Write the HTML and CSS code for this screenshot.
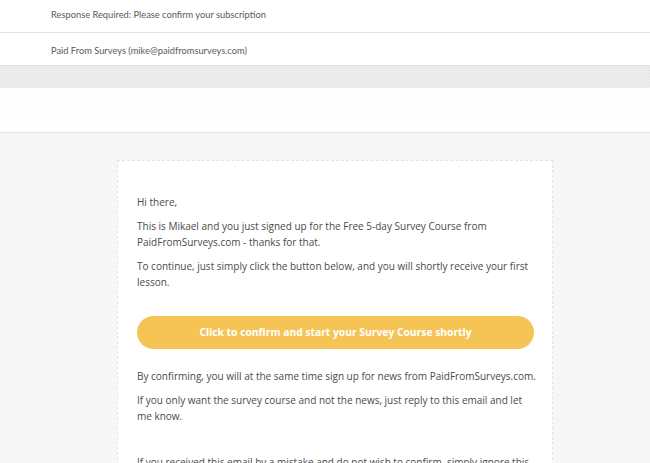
FILE: index.html
```html
<!DOCTYPE html>
<html>
<head>
<meta charset="utf-8">
<link rel="stylesheet" href="styles.css">
</head>
<body>
<div class="header-row subject">Response Required: Please confirm your subscription</div>
<div class="header-row sender">Paid From Surveys (mike@paidfromsurveys.com)</div>
<div class="band"></div>
<div class="blank"></div>
<div class="email-bg">
  <div class="card">
    <p>Hi there,</p>
    <p>This is Mikael and you just signed up for the Free 5-day Survey Course from PaidFromSurveys.com - thanks for that.</p>
    <p>To continue, just simply click the button below, and you will shortly receive your first lesson.</p>
    <div class="btn">Click to confirm and start your Survey Course shortly</div>
    <p>By confirming, you will at the same time sign up for news from PaidFromSurveys.com.</p>
    <p>If you only want the survey course and not the news, just reply to this email and let me know.</p>
    <p class="gap">If you received this email by a mistake and do not wish to confirm, simply ignore this email.</p>
  </div>
</div>
</body>
</html>
```
FILE: styles.css
```css
html, body {
  margin: 0;
  padding: 0;
  background: #ffffff;
  overflow: hidden;
  height: 463px;
}
.header-row {
  height: 33px;
  box-sizing: border-box;
  padding-left: 51px;
  border-bottom: 1px solid #e2e2e2;
  font-family: "Lato", "Liberation Sans", sans-serif;
  font-size: 9.3px;
  line-height: 12px;
  color: #5a5a5a;
}
.subject {
  padding-top: 9px;
}
.sender {
  padding-top: 12px;
}
.band {
  height: 22px;
  background-color: #ececec;
  background-image: radial-gradient(#e4e4e4 0.6px, transparent 0.8px);
  background-size: 3px 3px;
}
.blank {
  height: 44px;
  border-bottom: 1px solid #e4e4e4;
  background: #fefefe;
}
.email-bg {
  background-color: #f6f7f6;
  background-image: radial-gradient(#f1f2f1 0.6px, transparent 0.8px);
  background-size: 4px 4px;
  padding-top: 27px;
  height: 400px;
  box-sizing: border-box;
}
.card {
  width: 436px;
  margin-left: 117px;
  box-sizing: border-box;
  background: #ffffff;
  border: 1px dashed #e3e3e3;
  padding: 33px 15px 0 19px;
  font-family: "Open Sans", "Liberation Sans", sans-serif;
  font-size: 10px;
  line-height: 16px;
  color: #4a4a4a;
  height: 320px;
}
.card p {
  margin: 0 0 8px 0;
}
.btn {
  margin: 26px 3px 19px 0;
  height: 33px;
  line-height: 33px;
  border-radius: 17px;
  background: #f6c455;
  color: #ffffff;
  font-weight: 700;
  text-align: center;
  font-size: 10.3px;
}
.card p.gap {
  margin-top: 30px;
}
```
